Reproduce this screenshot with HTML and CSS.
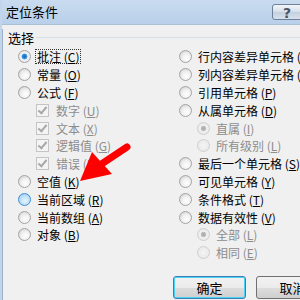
FILE: index.html
```html
<!DOCTYPE html>
<html lang="zh-CN">
<head>
  <meta charset="UTF-8">
  <title>定位条件</title>
  <link rel="stylesheet" href="styles.css">
</head>
<body>
  <div class="window">
    <div class="titlebar">
      <span class="title">定位条件</span>
      <span class="help">?</span>
    </div>

    <div class="content">
      <div class="group-head">
        <span>选择</span>
        <span class="rule"></span>
      </div>

      <div class="columns">
        <div class="col">
          <div class="row"><span class="radio checked"></span><span class="label focus">批注 (<u>C</u>)</span></div>
          <div class="row"><span class="radio"></span><span class="label">常量 (<u>O</u>)</span></div>
          <div class="row"><span class="radio"></span><span class="label">公式 (<u>F</u>)</span></div>
          <div class="row sub"><span class="check"></span><span class="label off">数字 (<u>U</u>)</span></div>
          <div class="row sub"><span class="check"></span><span class="label off">文本 (<u>X</u>)</span></div>
          <div class="row sub"><span class="check"></span><span class="label off">逻辑值 (<u>G</u>)</span></div>
          <div class="row sub"><span class="check"></span><span class="label off">错误 (<u>E</u>)</span></div>
          <div class="row"><span class="radio"></span><span class="label">空值 (<u>K</u>)</span></div>
          <div class="row"><span class="radio hover"></span><span class="label">当前区域 (<u>R</u>)</span></div>
          <div class="row"><span class="radio"></span><span class="label">当前数组 (<u>A</u>)</span></div>
          <div class="row"><span class="radio"></span><span class="label">对象 (<u>B</u>)</span></div>
        </div>
        <div class="col">
          <div class="row"><span class="radio"></span><span class="label">行内容差异单元格 (<u>W</u>)</span></div>
          <div class="row"><span class="radio"></span><span class="label">列内容差异单元格 (<u>M</u>)</span></div>
          <div class="row"><span class="radio"></span><span class="label">引用单元格 (<u>P</u>)</span></div>
          <div class="row"><span class="radio"></span><span class="label">从属单元格 (<u>D</u>)</span></div>
          <div class="row sub"><span class="radio off checked"></span><span class="label off">直属 (<u>I</u>)</span></div>
          <div class="row sub"><span class="radio off"></span><span class="label off">所有级别 (<u>L</u>)</span></div>
          <div class="row"><span class="radio"></span><span class="label">最后一个单元格 (<u>S</u>)</span></div>
          <div class="row"><span class="radio"></span><span class="label">可见单元格 (<u>Y</u>)</span></div>
          <div class="row"><span class="radio"></span><span class="label">条件格式 (<u>T</u>)</span></div>
          <div class="row"><span class="radio"></span><span class="label">数据有效性 (<u>V</u>)</span></div>
          <div class="row sub"><span class="radio off checked"></span><span class="label off">全部 (<u>L</u>)</span></div>
          <div class="row sub"><span class="radio off"></span><span class="label off">相同 (<u>E</u>)</span></div>
        </div>
      </div>

      <div class="buttons">
        <button class="btn default">确定</button>
        <button class="btn">取消</button>
      </div>
    </div>

    <!-- red pointer drawn over the dialog -->
    <svg class="arrow" width="300" height="300" viewBox="0 0 300 300">
      <line x1="127" y1="147" x2="100" y2="165" stroke="#f00" stroke-width="7" stroke-linecap="round"/>
      <polygon points="80,181 92,152 112,174" fill="#f00"/>
    </svg>
  </div>
</body>
</html>
```

FILE: styles.css
```css
body {
  margin: 0;
  padding: 0;
  font-family: "Noto Sans CJK SC", "Liberation Sans", sans-serif;
  font-size: 12px;
  color: #000;
}
.window {
  position: relative;
  width: 300px;
  height: 300px;
  overflow: hidden;
  background-color: #f0f0f0;
  box-sizing: border-box;
  border-left: 2px solid #c3d5ea;
}
.titlebar {
  height: 24px;
  display: flex;
  align-items: center;
  justify-content: space-between;
  background: linear-gradient(#c9dbef, #b9d0ea);
  border-bottom: 1px solid #a9bfd6;
  margin-left: -2px;
  padding-left: 6px;
}
.title {
  font-size: 13px;
  line-height: 16px;
}
.help {
  width: 36px;
  height: 16px;
  margin-right: -8px;
  border: 1px solid #6d7f99;
  border-radius: 3px;
  background: linear-gradient(#f3f6fa, #d5dee9 50%, #c3cfdd 51%, #d8e2ee);
  color: #4a5563;
  font-family: "DejaVu Sans", sans-serif;
  font-weight: bold;
  font-size: 14px;
  line-height: 16px;
  padding-left: 10px;
  box-sizing: border-box;
}
.content {
  border-left: 1px solid #9fb3c8;
  height: 275px;
}
.group-head {
  display: flex;
  align-items: center;
  gap: 2px;
  height: 16px;
  margin-top: 4px;
  padding-left: 5px;
  font-size: 13px;
}
.rule {
  flex: 1;
  height: 1px;
  background-color: #d5dfe5;
  margin-top: 1px;
}
.columns {
  display: grid;
  grid-template-columns: 161px auto;
  padding-left: 15px;
  margin-top: 3px;
}
.row {
  height: 17.8px;
  display: flex;
  align-items: center;
  white-space: nowrap;
}
.row.sub {
  padding-left: 18px;
}
.label {
  padding: 0 1px;
  border: 1px dotted transparent;
  line-height: 13px;
}
.label.focus {
  border-color: #333;
}
.label u {
  text-underline-offset: 1px;
}
.off {
  color: #8d8d8d;
}
.radio {
  width: 11px;
  height: 11px;
  margin-right: 4px;
  border-radius: 50%;
  border: 1px solid #a4a4a4;
  background: radial-gradient(circle at 60% 65%, #ffffff 0%, #f0f0f0 45%, #c9c9c9 100%);
  flex-shrink: 0;
}
.radio.checked {
  background: radial-gradient(circle, #1d66b5 0%, #2e86d4 25%, #6bb4ec 36%, #f4f4f4 42%, #dcdcdc 100%);
}
.radio.hover {
  border-color: #3f8ed8;
  background: radial-gradient(circle at 55% 60%, #e8f6ff 0%, #b6dcf8 60%, #7dbdf0 100%);
}
.radio.off {
  border-color: #cfcfcf;
  background: radial-gradient(circle, #f4f4f4, #e6e6e6);
}
.radio.off.checked {
  background: radial-gradient(circle, #a9a9a9 0%, #bdbdbd 30%, #f1f1f1 40%, #e2e2e2 100%);
}
.check {
  width: 11px;
  height: 11px;
  margin-right: 5px;
  border: 1px solid #c4c4c4;
  background-color: #f4f4f4;
  flex-shrink: 0;
  position: relative;
}
.check::after {
  content: "";
  position: absolute;
  left: 3px;
  top: 0px;
  width: 3px;
  height: 7px;
  border: solid #a8a8a8;
  border-width: 0 2px 2px 0;
  transform: rotate(40deg);
}
.buttons {
  display: flex;
  gap: 10px;
  padding-left: 170px;
  margin-top: 14px;
}
.btn {
  flex-shrink: 0;
  width: 73px;
  height: 23px;
  font-family: inherit;
  font-size: 13px;
  color: #000;
  border: 1px solid #707070;
  border-radius: 3px;
  background: linear-gradient(#f2f2f2, #ebebeb 50%, #dddddd 51%, #cfcfcf);
  padding: 0;
}
.btn.default {
  border-color: #3c7fb1;
  box-shadow: inset 0 0 0 1px #48d2f8;
}
.arrow {
  position: absolute;
  left: -2px;
  top: 0;
  pointer-events: none;
}
```
